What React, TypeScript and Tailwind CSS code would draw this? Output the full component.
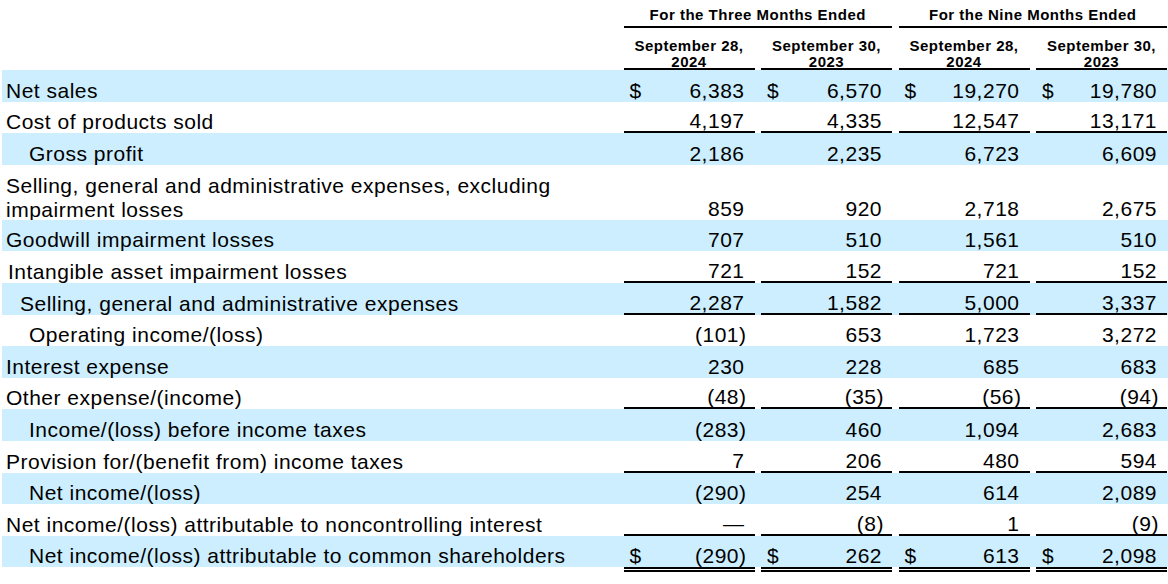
import React from 'react'

type Row = {
  label: React.ReactNode
  pad: string
  vals: string[]
  blue?: boolean
  dollar?: boolean
  rule?: boolean
  tall?: boolean
}

const rows: Row[] = [
  { label: 'Net sales', pad: 'pl-[4px]', vals: ['6,383', '6,570', '19,270', '19,780'], blue: true, dollar: true },
  { label: 'Cost of products sold', pad: 'pl-[4px]', vals: ['4,197', '4,335', '12,547', '13,171'], rule: true },
  { label: 'Gross profit', pad: 'pl-[27px]', vals: ['2,186', '2,235', '6,723', '6,609'], blue: true },
  {
    label: (
      <>
        Selling, general and administrative expenses, excluding
        <br />
        impairment losses
      </>
    ),
    pad: 'pl-[4px]',
    vals: ['859', '920', '2,718', '2,675'],
    tall: true,
  },
  { label: 'Goodwill impairment losses', pad: 'pl-[4px]', vals: ['707', '510', '1,561', '510'], blue: true },
  { label: 'Intangible asset impairment losses', pad: 'pl-[6px]', vals: ['721', '152', '721', '152'], rule: true },
  { label: 'Selling, general and administrative expenses', pad: 'pl-[18px]', vals: ['2,287', '1,582', '5,000', '3,337'], blue: true, rule: true },
  { label: 'Operating income/(loss)', pad: 'pl-[27px]', vals: ['(101)', '653', '1,723', '3,272'] },
  { label: 'Interest expense', pad: 'pl-[4px]', vals: ['230', '228', '685', '683'], blue: true },
  { label: 'Other expense/(income)', pad: 'pl-[4px]', vals: ['(48)', '(35)', '(56)', '(94)'], rule: true },
  { label: 'Income/(loss) before income taxes', pad: 'pl-[27px]', vals: ['(283)', '460', '1,094', '2,683'], blue: true },
  { label: 'Provision for/(benefit from) income taxes', pad: 'pl-[4px]', vals: ['7', '206', '480', '594'], rule: true },
  { label: 'Net income/(loss)', pad: 'pl-[27px]', vals: ['(290)', '254', '614', '2,089'], blue: true },
  { label: 'Net income/(loss) attributable to noncontrolling interest', pad: 'pl-[4px]', vals: ['—', '(8)', '1', '(9)'], rule: true },
  { label: 'Net income/(loss) attributable to common shareholders', pad: 'pl-[27px]', vals: ['(290)', '262', '613', '2,098'], blue: true, dollar: true },
]

const grid = 'grid grid-cols-[615px_131px_131px_131px_131px] gap-x-[6.5px]'

function Num({ v }: { v: string }) {
  if (v.endsWith(')')) {
    return (
      <span>
        {v.slice(0, -1)}
        <span className="-mr-[2px]">)</span>
      </span>
    )
  }
  return <span>{v}</span>
}

function DateHead({ day, year }: { day: string; year: string }) {
  return (
    <div className="flex flex-col items-center justify-end border-b-2 border-black">
      <div className="leading-[16px]">{day}</div>
      <div className="leading-[16px] -mb-[2px]">{year}</div>
    </div>
  )
}

export default function App() {
  return (
    <div className="w-[1168px] h-[584px] bg-white text-black font-['Liberation_Sans',Arial,sans-serif] overflow-hidden">
      <div className="ml-[2px] w-[1166px]">
        {/* Header */}
        <div className={`${grid} text-[15px] font-bold tracking-[0.5px]`}>
          <div />
          <div className="col-span-2 text-center leading-[15px] pt-[7px] pb-[4px] border-b-2 border-black">
            For the Three Months Ended
          </div>
          <div className="col-span-2 text-center leading-[15px] pt-[7px] pb-[4px] border-b-2 border-black">
            For the Nine Months Ended
          </div>
        </div>
        <div className={`${grid} h-[42px] text-[15px] font-bold tracking-[0.5px]`}>
          <div />
          <DateHead day="September 28," year="2024" />
          <DateHead day="September 30," year="2023" />
          <DateHead day="September 28," year="2024" />
          <DateHead day="September 30," year="2023" />
        </div>

        {/* Body */}
        <div className="text-[21px] tracking-[0.5px]">
          {rows.map((r, i) => (
            <div
              key={i}
              className={`${grid} overflow-hidden ${r.tall ? 'h-[55px]' : 'h-[31.6px]'} ${r.blue ? 'bg-[#cceeff]' : ''}`}
            >
              <div className={`flex items-end whitespace-nowrap pb-[1px] ${r.pad}`}>
                <div className={r.tall ? 'leading-[24px] -mb-[3px]' : 'leading-[21px]'}>{r.label}</div>
              </div>
              {r.vals.map((v, j) => (
                <div
                  key={j}
                  className={`flex items-end justify-between leading-[21px] pl-[6px] pr-[10px] ${r.rule ? 'border-b-2 border-black' : 'pb-[1px]'}`}
                >
                  <span>{r.dollar ? '$' : ''}</span>
                  <Num v={v} />
                </div>
              ))}
            </div>
          ))}
          <div className={grid}>
            <div />
            <div className="h-[5px] border-y-2 border-black" />
            <div className="h-[5px] border-y-2 border-black" />
            <div className="h-[5px] border-y-2 border-black" />
            <div className="h-[5px] border-y-2 border-black" />
          </div>
        </div>
      </div>
    </div>
  )
}
